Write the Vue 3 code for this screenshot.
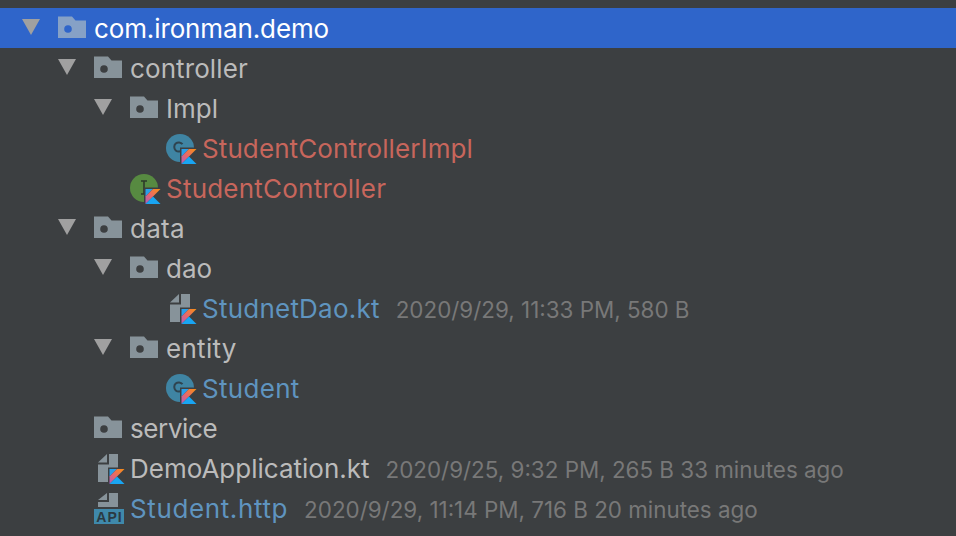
<script setup>
// fit = letter spacing in px, evens out the name widths against the mac font
const rows = [
  { name: 'com.ironman.demo', depth: 0, arrow: true, icon: 'folder', selected: true, fit: -0.12 },
  { name: 'controller', depth: 1, arrow: true, icon: 'folder', fit: 0.1 },
  { name: 'Impl', depth: 2, arrow: true, icon: 'folder' },
  { name: 'StudentControllerImpl', depth: 3, icon: 'class', tone: 'red', fit: 0.1 },
  { name: 'StudentController', depth: 2, icon: 'interface', tone: 'red', fit: 0.22 },
  { name: 'data', depth: 1, arrow: true, icon: 'folder', fit: 0.25 },
  { name: 'dao', depth: 2, arrow: true, icon: 'folder' },
  { name: 'StudnetDao.kt', depth: 3, icon: 'file', tone: 'blue', meta: '2020/9/29, 11:33 PM, 580 B', fit: 0.23 },
  { name: 'entity', depth: 2, arrow: true, icon: 'folder', fit: 0.3 },
  { name: 'Student', depth: 3, icon: 'class', tone: 'blue', fit: 0.3 },
  { name: 'service', depth: 1, icon: 'folder', fit: -0.4 },
  { name: 'DemoApplication.kt', depth: 1, icon: 'file', meta: '2020/9/25, 9:32 PM, 265 B 33 minutes ago' },
  { name: 'Student.http', depth: 1, icon: 'api', tone: 'blue', meta: '2020/9/29, 11:14 PM, 716 B 20 minutes ago', fit: 0.62 }
];
const indent = 36;
</script>

<template>
  <div class="tree">
    <div
      v-for="row in rows"
      :key="row.name"
      class="tree__row"
      :class="{ 'tree__row--selected': row.selected }"
      :style="{ paddingLeft: 22 + row.depth * indent + 'px' }"
    >
      <div class="tree__arrow">
        <svg v-if="row.arrow" width="18" height="16" viewBox="0 0 18 16">
          <path d="M0 0H18L9 16Z" fill="#a0a0a0" />
        </svg>
      </div>

      <div class="tree__icon">
        <svg width="32" height="32" viewBox="0 0 32 32">
          <defs>
            <linearGradient id="kotlinBand" x1="1" y1="0" x2="0" y2="1">
              <stop offset="0.1" stop-color="#f58a1f" />
              <stop offset="0.55" stop-color="#e8676b" />
              <stop offset="1" stop-color="#a95fc4" />
            </linearGradient>
          </defs>

          <template v-if="row.icon === 'folder'">
            <path
              d="M0 4.5H14L17.5 8.5H28V26H0Z"
              :fill="row.selected ? '#86a1c6' : '#87939a'"
            />
            <circle cx="10" cy="17" r="3.8" :fill="row.selected ? '#2f65ca' : '#3c3f41'" />
          </template>

          <template v-if="row.icon === 'class'">
            <circle cx="14" cy="16" r="14" fill="#3f84a3" />
            <path d="M16.5 12.2A4.6 4.6 0 1 0 16.5 17.8" fill="none" stroke="#2f4450" stroke-width="2" />
          </template>

          <template v-if="row.icon === 'interface'">
            <circle cx="14" cy="16" r="14" fill="#578a41" />
            <path d="M11 9H17M14 9V22M11 22H17" fill="none" stroke="#2d3a2a" stroke-width="1.6" />
          </template>

          <template v-if="row.icon === 'file'">
            <path d="M4 10.5L13 2V10.5Z" fill="#87939a" />
            <path d="M15 2H24V30H4V12.5H15Z" fill="#87939a" />
          </template>

          <template v-if="row.icon === 'api'">
            <path d="M4 8L13 1V8Z" fill="#87939a" />
            <path d="M15 1H24V15H4V10H15Z" fill="#87939a" />
            <rect x="0" y="17" width="30" height="15" fill="#3f89ab" />
            <text x="15.5" y="29.5" class="tree__api">API</text>
          </template>

          <g v-if="row.icon === 'class' || row.icon === 'interface' || row.icon === 'file'">
            <rect x="14" y="15.5" width="17.5" height="17" fill="#3c3f41" />
            <path d="M15.5 17H23L15.5 24.5Z" fill="#2b9fe8" />
            <path d="M23 17H30.5L15.5 32V24.5Z" fill="url(#kotlinBand)" />
            <path d="M23 24.5L30.5 32H15.5Z" fill="#19a5f2" />
          </g>
        </svg>
      </div>

      <span
        class="tree__name"
        :class="row.tone && 'tree__name--' + row.tone"
        :style="{ letterSpacing: (row.fit || 0) + 'px' }"
      >{{ row.name }}</span>
      <span v-if="row.meta" class="tree__meta">{{ row.meta }}</span>
    </div>
  </div>
</template>

<style>
html, body {
  margin: 0;
  background: #3c3f41;
}
</style>

<style scoped>
.tree {
  width: 956px;
  height: 536px;
  padding-top: 8px;
  box-sizing: border-box;
  overflow: hidden;
  background: #3c3f41;
  font-family: Inter, "Liberation Sans", sans-serif;
}

.tree__row {
  display: flex;
  align-items: center;
  height: 40px;
  white-space: nowrap;
}

.tree__row--selected {
  background: #2f65ca;
}

.tree__arrow {
  display: flex;
  flex: none;
  width: 36px;
  margin-top: -3px;
}

.tree__icon {
  display: flex;
  flex: none;
  width: 36px;
}

.tree__name {
  font-size: 26px;
  color: #bbbbbb;
}

.tree__row--selected .tree__name {
  color: #ffffff;
}

.tree__name--red {
  color: #c7665c;
}

.tree__name--blue {
  color: #5f94bf;
}

.tree__meta {
  margin-left: 16px;
  padding-top: 3px;
  font-size: 22.4px;
  color: #787878;
}

.tree__api {
  font-family: "Liberation Sans", sans-serif;
  font-size: 14px;
  font-weight: 700;
  text-anchor: middle;
  fill: #2b3a42;
  letter-spacing: 1px;
}
</style>
